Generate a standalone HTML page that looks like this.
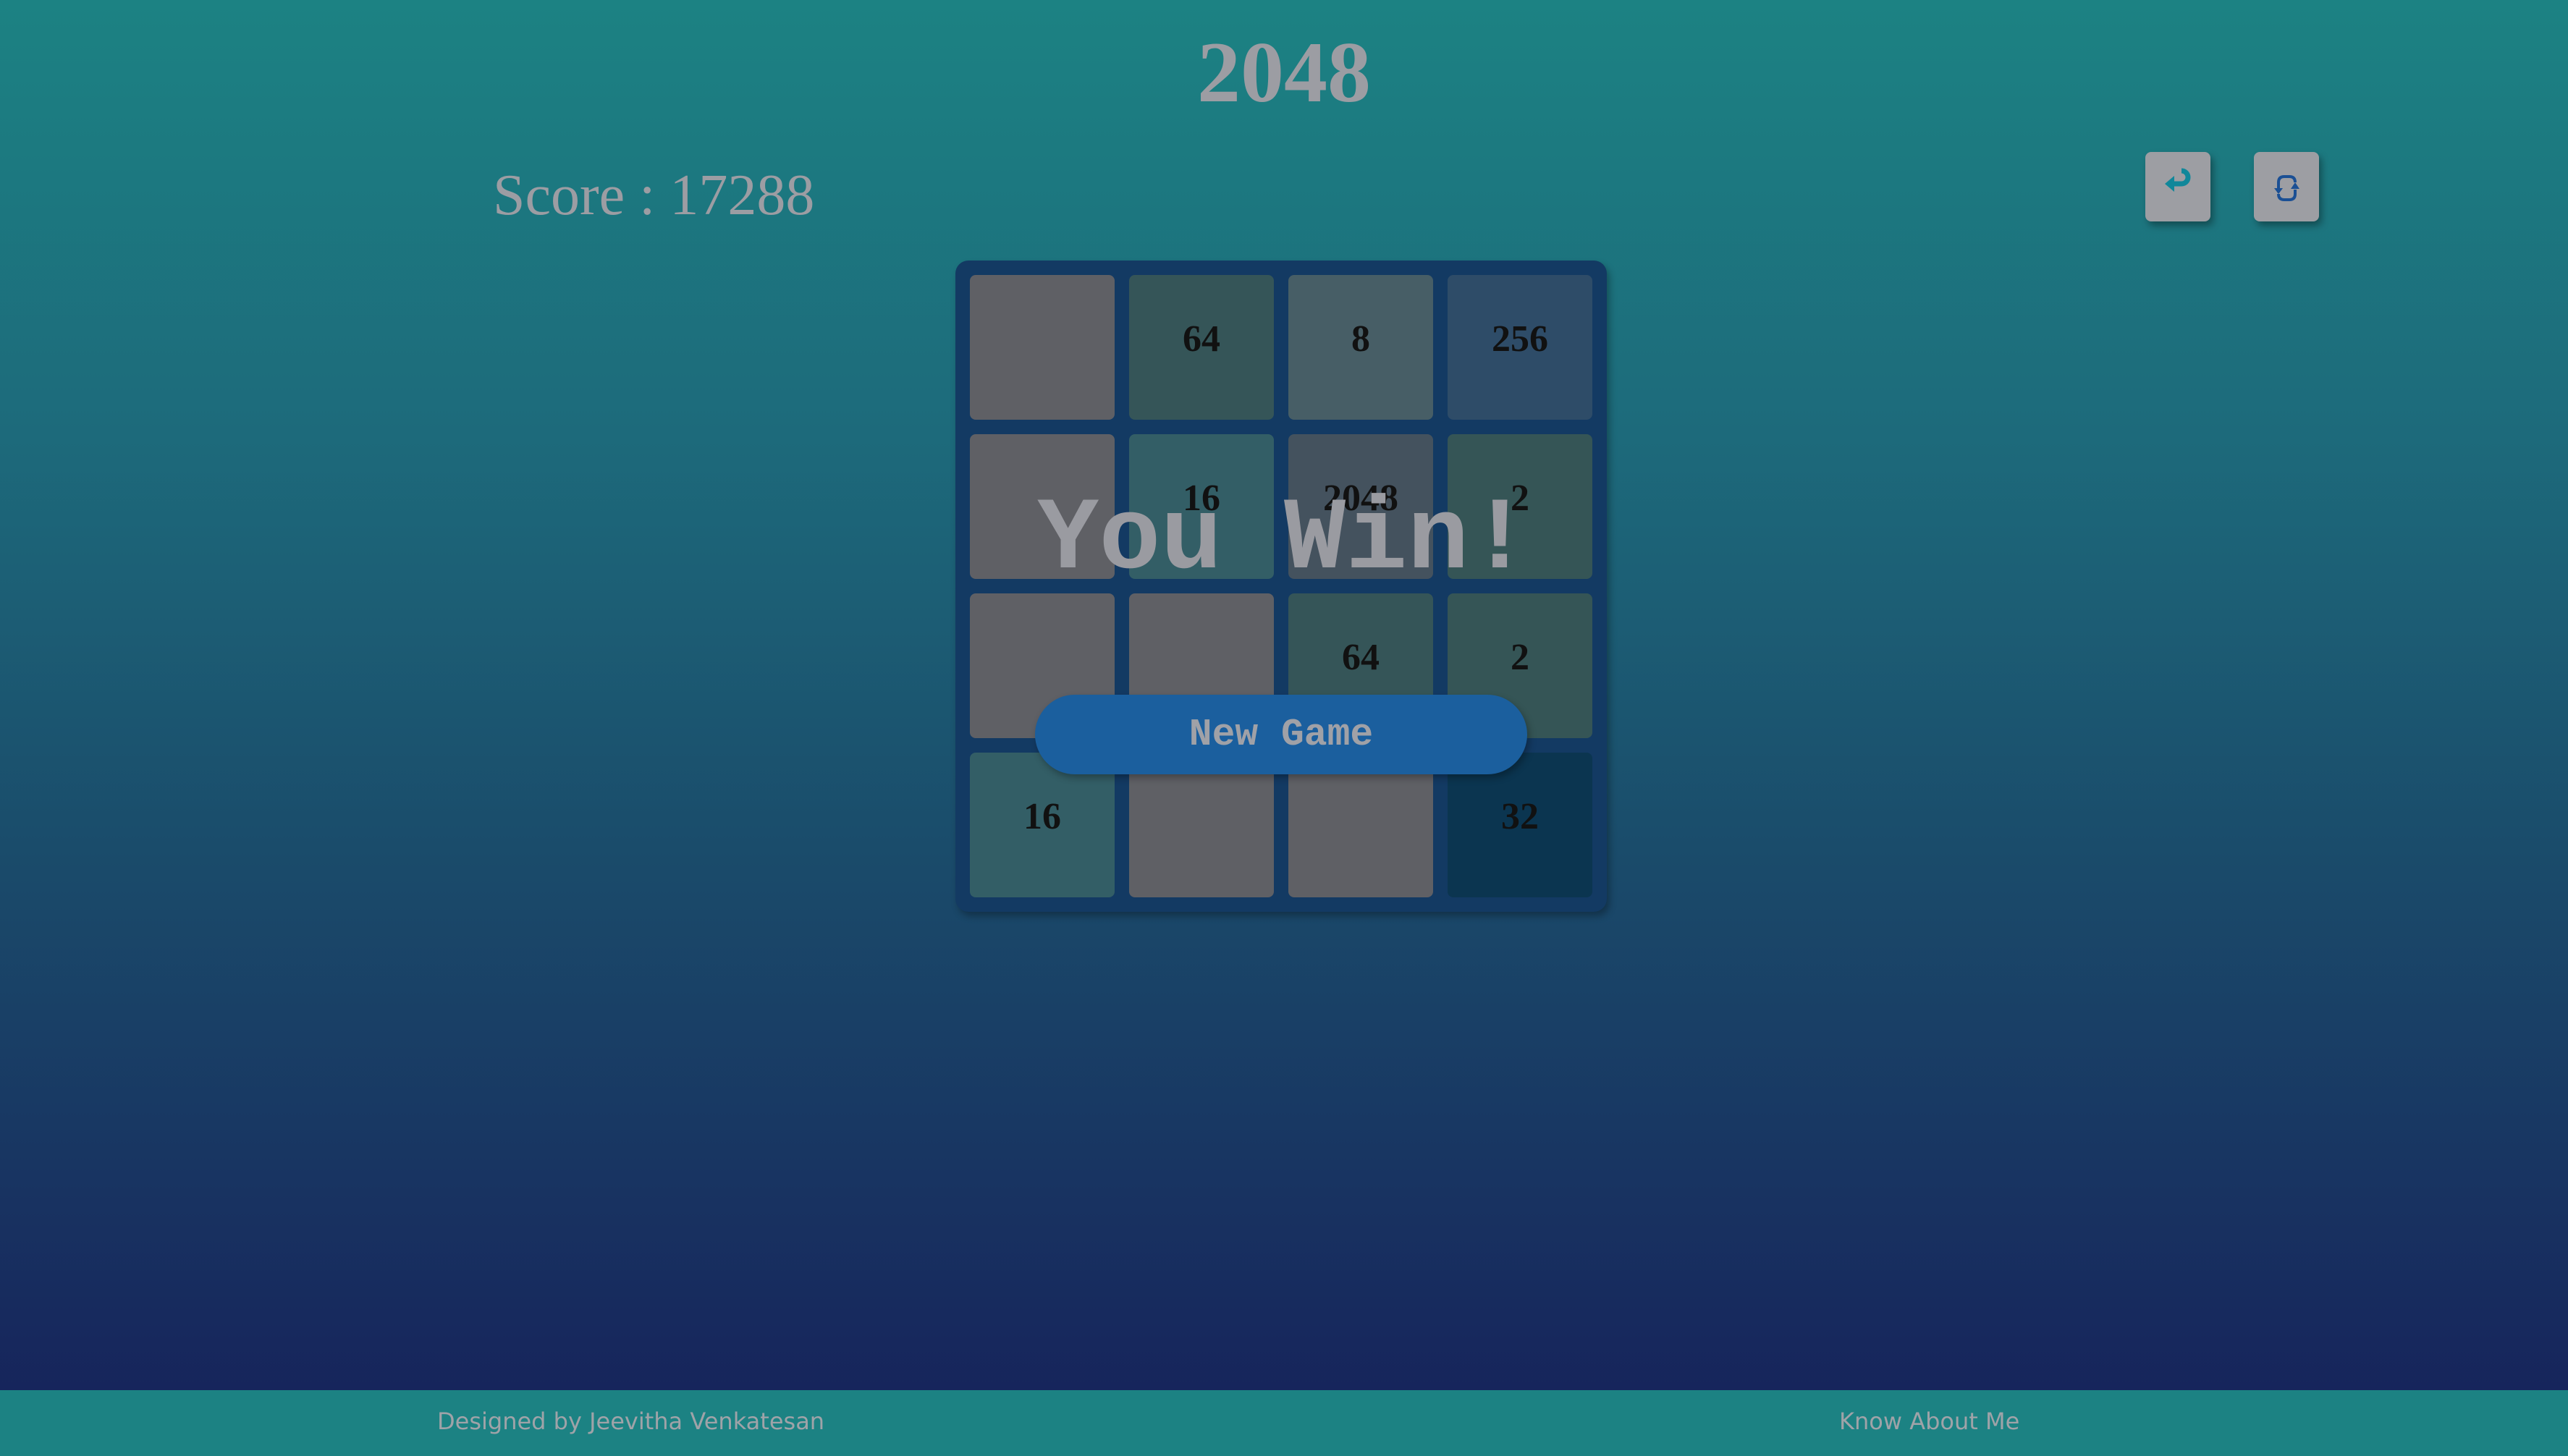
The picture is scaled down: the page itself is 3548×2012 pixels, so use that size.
<!DOCTYPE html>
<html><head><meta charset="utf-8"><style>
html,body{margin:0;padding:0;width:3548px;height:2012px;overflow:hidden}
body{position:relative;background:linear-gradient(to bottom,#1c8283 0%,#1d6a7b 30%,#1a4a6a 60%,#16205a 100%);font-family:"Liberation Serif",serif}
.title{position:absolute;left:0;width:3548px;top:30px;text-align:center;font-size:120px;font-weight:bold;color:#9c9da3;line-height:140px}
.score{position:absolute;left:681px;top:220px;font-size:80px;color:#9c9da3;line-height:100px}
.btn{position:absolute;top:210px;width:90px;height:96px;background:#9d9ea3;border-radius:8px;box-shadow:4px 6px 10px rgba(0,0,0,.35)}
.board{position:absolute;left:1320px;top:360px;width:900px;height:900px;background:#133a63;border-radius:18px;box-shadow:4px 6px 10px rgba(0,0,0,.3)}
.t{position:absolute;width:200px;height:200px;border-radius:8px;font-weight:bold;font-size:52px;color:#111;display:flex;align-items:center;justify-content:center;padding-bottom:24px;box-sizing:border-box}
.win{position:absolute;left:0;width:3548px;top:672px;text-align:center;font-family:"Liberation Mono",monospace;font-weight:bold;font-size:142px;color:#9a9ba1;line-height:150px}
.ng{position:absolute;left:1430px;top:960px;width:680px;height:110px;border-radius:55px;background:#1b5f9e;box-shadow:3px 5px 10px rgba(0,0,0,.3);font-family:"Liberation Mono",monospace;font-weight:bold;font-size:53px;color:#a0a1a7;text-align:center;line-height:110px}
.foot{position:absolute;left:0;top:1921px;width:3548px;height:91px;background:#1c8283;font-family:"DejaVu Sans",sans-serif;font-size:32px;color:#9fa3a8}
</style></head><body>
<div class="title">2048</div>
<div class="score">Score : 17288</div>
<div class="btn" style="left:2964px"><svg width="90" height="96" viewBox="0 0 90 96"><path d="M38 44 H50 A9 9 0 0 0 50 26" fill="none" stroke="#10879a" stroke-width="7"/><path d="M27 44 L40 33 L40 55 Z" fill="#10879a"/></svg></div>
<div class="btn" style="left:3114px"><svg width="90" height="96" viewBox="0 0 90 96"><path d="M34 56 V42 Q34 34 42 34 H49 Q57 34 57 42 M57 52 V58 Q57 66 49 66 H42 Q34 66 34 58" fill="none" stroke="#1a4f94" stroke-width="4"/><path d="M28 50 L40 50 L34 58 Z M51 51 L63 51 L57 42 Z" fill="#1a4f94"/></svg></div>
<div class="board">
<div class="t" style="left:20px;top:20px;background:#5f6065"></div>
<div class="t" style="left:240px;top:20px;background:#355558">64</div>
<div class="t" style="left:460px;top:20px;background:#475e66">8</div>
<div class="t" style="left:680px;top:20px;background:#2e4c68">256</div>
<div class="t" style="left:20px;top:240px;background:#5f6065"></div>
<div class="t" style="left:240px;top:240px;background:#335e66">16</div>
<div class="t" style="left:460px;top:240px;background:#44525e">2048</div>
<div class="t" style="left:680px;top:240px;background:#355556">2</div>
<div class="t" style="left:20px;top:460px;background:#5f6065"></div>
<div class="t" style="left:240px;top:460px;background:#5f6065"></div>
<div class="t" style="left:460px;top:460px;background:#355558">64</div>
<div class="t" style="left:680px;top:460px;background:#355556">2</div>
<div class="t" style="left:20px;top:680px;background:#335e66">16</div>
<div class="t" style="left:240px;top:680px;background:#5f6065"></div>
<div class="t" style="left:460px;top:680px;background:#5f6065"></div>
<div class="t" style="left:680px;top:680px;background:#0b3550">32</div>
</div>
<div class="win">You Win!</div>
<div class="ng">New Game</div>
<div class="foot"><span style="position:absolute;left:604px;top:24px">Designed by Jeevitha Venkatesan</span><span style="position:absolute;left:2541px;top:24px">Know About Me</span></div>
</body></html>
